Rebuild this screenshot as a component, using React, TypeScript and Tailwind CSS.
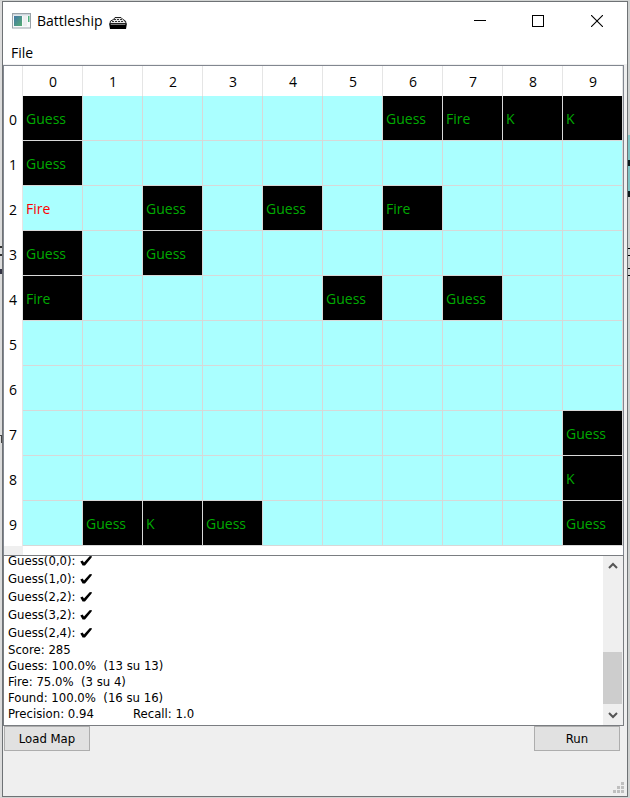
import React from "react";

type Mark = { text: string; miss?: boolean };

const marks: Record<string, Mark> = {
  "0,0": { text: "Guess" },
  "0,6": { text: "Guess" },
  "0,7": { text: "Fire" },
  "0,8": { text: "K" },
  "0,9": { text: "K" },
  "1,0": { text: "Guess" },
  "2,0": { text: "Fire", miss: true },
  "2,2": { text: "Guess" },
  "2,4": { text: "Guess" },
  "2,6": { text: "Fire" },
  "3,0": { text: "Guess" },
  "3,2": { text: "Guess" },
  "4,0": { text: "Fire" },
  "4,5": { text: "Guess" },
  "4,7": { text: "Guess" },
  "7,9": { text: "Guess" },
  "8,9": { text: "K" },
  "9,1": { text: "Guess" },
  "9,2": { text: "K" },
  "9,3": { text: "Guess" },
  "9,9": { text: "Guess" },
};

const indices = [0, 1, 2, 3, 4, 5, 6, 7, 8, 9];
const hits = ["0,0", "1,0", "2,2", "3,2", "2,4"];
const summary = ["Score: 285", "Guess: 100.0%  (13 su 13)", "Fire: 75.0%  (3 su 4)", "Found: 100.0%  (16 su 16)"];

function Check() {
  return (
    <svg width="12" height="12" viewBox="0 0 12 12" className="ml-1" role="img" aria-label="hit">
      <path d="M0.3 6.6 L2.6 5.6 L4 7.4 L9.6 1.2 L11.8 1 L11.6 2.4 L5 10.4 L2.6 10.6 Z" fill="#000" />
    </svg>
  );
}

function TitleBar() {
  return (
    <header className="flex h-[38px] items-center bg-white pl-[9px]">
      <svg width="19" height="16" viewBox="0 0 19 16" aria-hidden="true">
        <defs>
          <linearGradient id="pane" x1="0" y1="0" x2="1" y2="1">
            <stop offset="0" stopColor="#4377a8" />
            <stop offset="1" stopColor="#55ad72" />
          </linearGradient>
        </defs>
        <rect x="0.5" y="0.5" width="18" height="14.5" fill="#f8fafb" stroke="#9aa3a9" />
        <rect x="1" y="1" width="17" height="1.5" fill="#ccd5dc" />
        <rect x="2" y="3" width="8" height="10" fill="url(#pane)" />
        <rect x="11" y="3" width="4" height="10" fill="#eceff0" />
        <rect x="16" y="3" width="1.5" height="6" fill="#4fb07e" />
      </svg>
      <h1 className="ml-[6px] text-sm">Battleship</h1>
      <svg width="18" height="14" viewBox="0 0 18 14" className="ml-[6px] mt-1" aria-hidden="true">
        <path d="M4.5 3.5 L6 1.5 H12 L14 3.5 L16.5 5 L17 7.5 H1 L1.5 5 Z" fill="#e8e8e8" stroke="#222" />
        <path d="M5 3.5 H13.5 M3 5.5 H15.5" stroke="#333" strokeDasharray="2 1" />
        <path d="M0 7 L2 8.5 H16 L18 7 L17 13 H1 Z" fill="#000" />
      </svg>
      <div className="ml-auto flex h-full">
        <button aria-label="Minimize" className="flex w-[58px] items-center justify-center">
          <svg width="12" height="12" viewBox="0 0 12 12"><path d="M0 5.5 H12" stroke="#000" /></svg>
        </button>
        <button aria-label="Maximize" className="flex w-[58px] items-center justify-center">
          <svg width="12" height="12" viewBox="0 0 12 12"><rect x="0.5" y="0.5" width="11" height="11" fill="none" stroke="#000" /></svg>
        </button>
        <button aria-label="Close" className="flex w-[60px] items-center justify-center">
          <svg width="12" height="12" viewBox="0 0 12 12"><path d="M0 0 L12 12 M12 0 L0 12" stroke="#000" strokeWidth="1.1" /></svg>
        </button>
      </div>
    </header>
  );
}

function Board() {
  return (
    <table className="w-full table-fixed border-separate border-spacing-0 text-sm">
      <thead>
        <tr className="h-[30px]">
          <td className="w-[19px] border-r border-[#e5e5e5] p-0" />
          {indices.map((c) => (
            <th key={c} scope="col" className="border-r border-[#e5e5e5] p-0 pt-[2px] pl-px font-normal">{c}</th>
          ))}
        </tr>
      </thead>
      <tbody>
        {indices.map((r) => (
          <tr key={r} className="h-[45px]">
            <th scope="row" className="border-r border-[#e5e5e5] p-0 pt-[2px] font-normal">{r}</th>
            {indices.map((c) => {
              const mark = marks[`${r},${c}`];
              const tone = !mark
                ? "bg-[#aaffff]"
                : mark.miss
                  ? "bg-[#aaffff] text-[#ff0000]"
                  : "bg-black text-[#00aa00]";
              return (
                <td key={c} className={`border-r border-b border-[#d8d8d8] p-0 pt-[2px] pl-[3px] ${tone}`}>
                  {mark?.text}
                </td>
              );
            })}
          </tr>
        ))}
      </tbody>
    </table>
  );
}

function Log() {
  return (
    <section className="flex h-[171px] border border-[#7a7d81] bg-white">
      <div role="log" className="flex flex-1 flex-col justify-end overflow-hidden pb-[3px] pl-1 font-['DejaVu_Sans_Condensed','DejaVu_Sans',sans-serif] text-[13px]">
        {hits.map((h) => (
          <p key={h} className="flex h-[18px] shrink-0 items-center">
            Guess({h}):
            <Check />
          </p>
        ))}
        {summary.map((s) => (
          <p key={s} className="h-4 shrink-0 leading-4 whitespace-pre">{s}</p>
        ))}
        <p className="flex h-4 shrink-0 leading-4">
          <span className="w-[125px]">Precision: 0.94</span>
          <span>Recall: 1.0</span>
        </p>
      </div>
      <div className="flex w-5 flex-col bg-[#efefef] pr-px">
        <button aria-label="Scroll up" className="flex h-5 items-center justify-center">
          <svg width="10" height="8" viewBox="0 0 10 8"><path d="M1 6 L5 2 L9 6" fill="none" stroke="#555" strokeWidth="2" /></svg>
        </button>
        <div className="flex flex-1 flex-col justify-end">
          <div className="h-[52px] bg-[#cdcdcd]" />
        </div>
        <button aria-label="Scroll down" className="flex h-[21px] items-center justify-center">
          <svg width="10" height="8" viewBox="0 0 10 8"><path d="M1 2 L5 6 L9 2" fill="none" stroke="#555" strokeWidth="2" /></svg>
        </button>
      </div>
    </section>
  );
}

function DesktopLeft() {
  return (
    <div className="w-[2px] bg-[#dcdcdc]" aria-hidden="true">
      <div className="mt-[245px] h-[10px] border-y-2 border-[#333]" />
      <div className="mt-[13px] h-[5px] bg-[#334]" />
      <div className="mt-[161px] h-[8px] border-t border-r border-[#444]" />
    </div>
  );
}

function DesktopRight() {
  return (
    <div className="w-[2px] bg-[#cfd1d0]" aria-hidden="true">
      <div className="mt-[134px] h-[62px] bg-[#7fc4c4] pt-[25px]">
        <div className="h-[6px] bg-[#0c1a1a]" />
        <div className="mt-[25px] h-[6px] bg-[#0c1a1a]" />
      </div>
      <div className="mt-[51px] h-2 border-y border-black" />
      <div className="mt-3 h-2 border-y border-black" />
    </div>
  );
}

const actionStyle =
  "h-[25px] w-[86px] border border-[#adadad] bg-[#e1e1e1] pt-px font-['DejaVu_Sans_Condensed','DejaVu_Sans',sans-serif] text-[13px]";

export default function App() {
  return (
    <div className="flex min-h-screen bg-[#d2d4d3] py-px font-['Open_Sans','Noto_Sans',sans-serif] text-black">
      <DesktopLeft />
      <main className="flex flex-1 flex-col border border-[#6e7275] bg-[#efefef]">
        <TitleBar />
        <nav className="flex h-[25px] items-center border-b border-[#f0f0f0] bg-white pt-px pl-2">
          <button className="text-sm">File</button>
        </nav>
        <div className="pr-[3px]">
          <section className="border border-b-0 border-[#828790] bg-white">
            <Board />
            <div className="h-[9px]">
              <div className="h-full w-[19px] bg-[#efefef]" />
            </div>
          </section>
          <Log />
          <div className="flex justify-between pr-1 pl-px">
            <button className={actionStyle}>Load Map</button>
            <button className={actionStyle}>Run</button>
          </div>
        </div>
        <div className="mt-auto flex justify-end p-[3px]">
          <svg width="11" height="11" viewBox="0 0 11 11" fill="#bfbfbf" aria-hidden="true">
            <path d="M8 0h3v3h-3z M4 4h3v3h-3z M8 4h3v3h-3z M0 8h3v3h-3z M4 8h3v3h-3z M8 8h3v3h-3z" />
          </svg>
        </div>
      </main>
      <DesktopRight />
    </div>
  );
}
